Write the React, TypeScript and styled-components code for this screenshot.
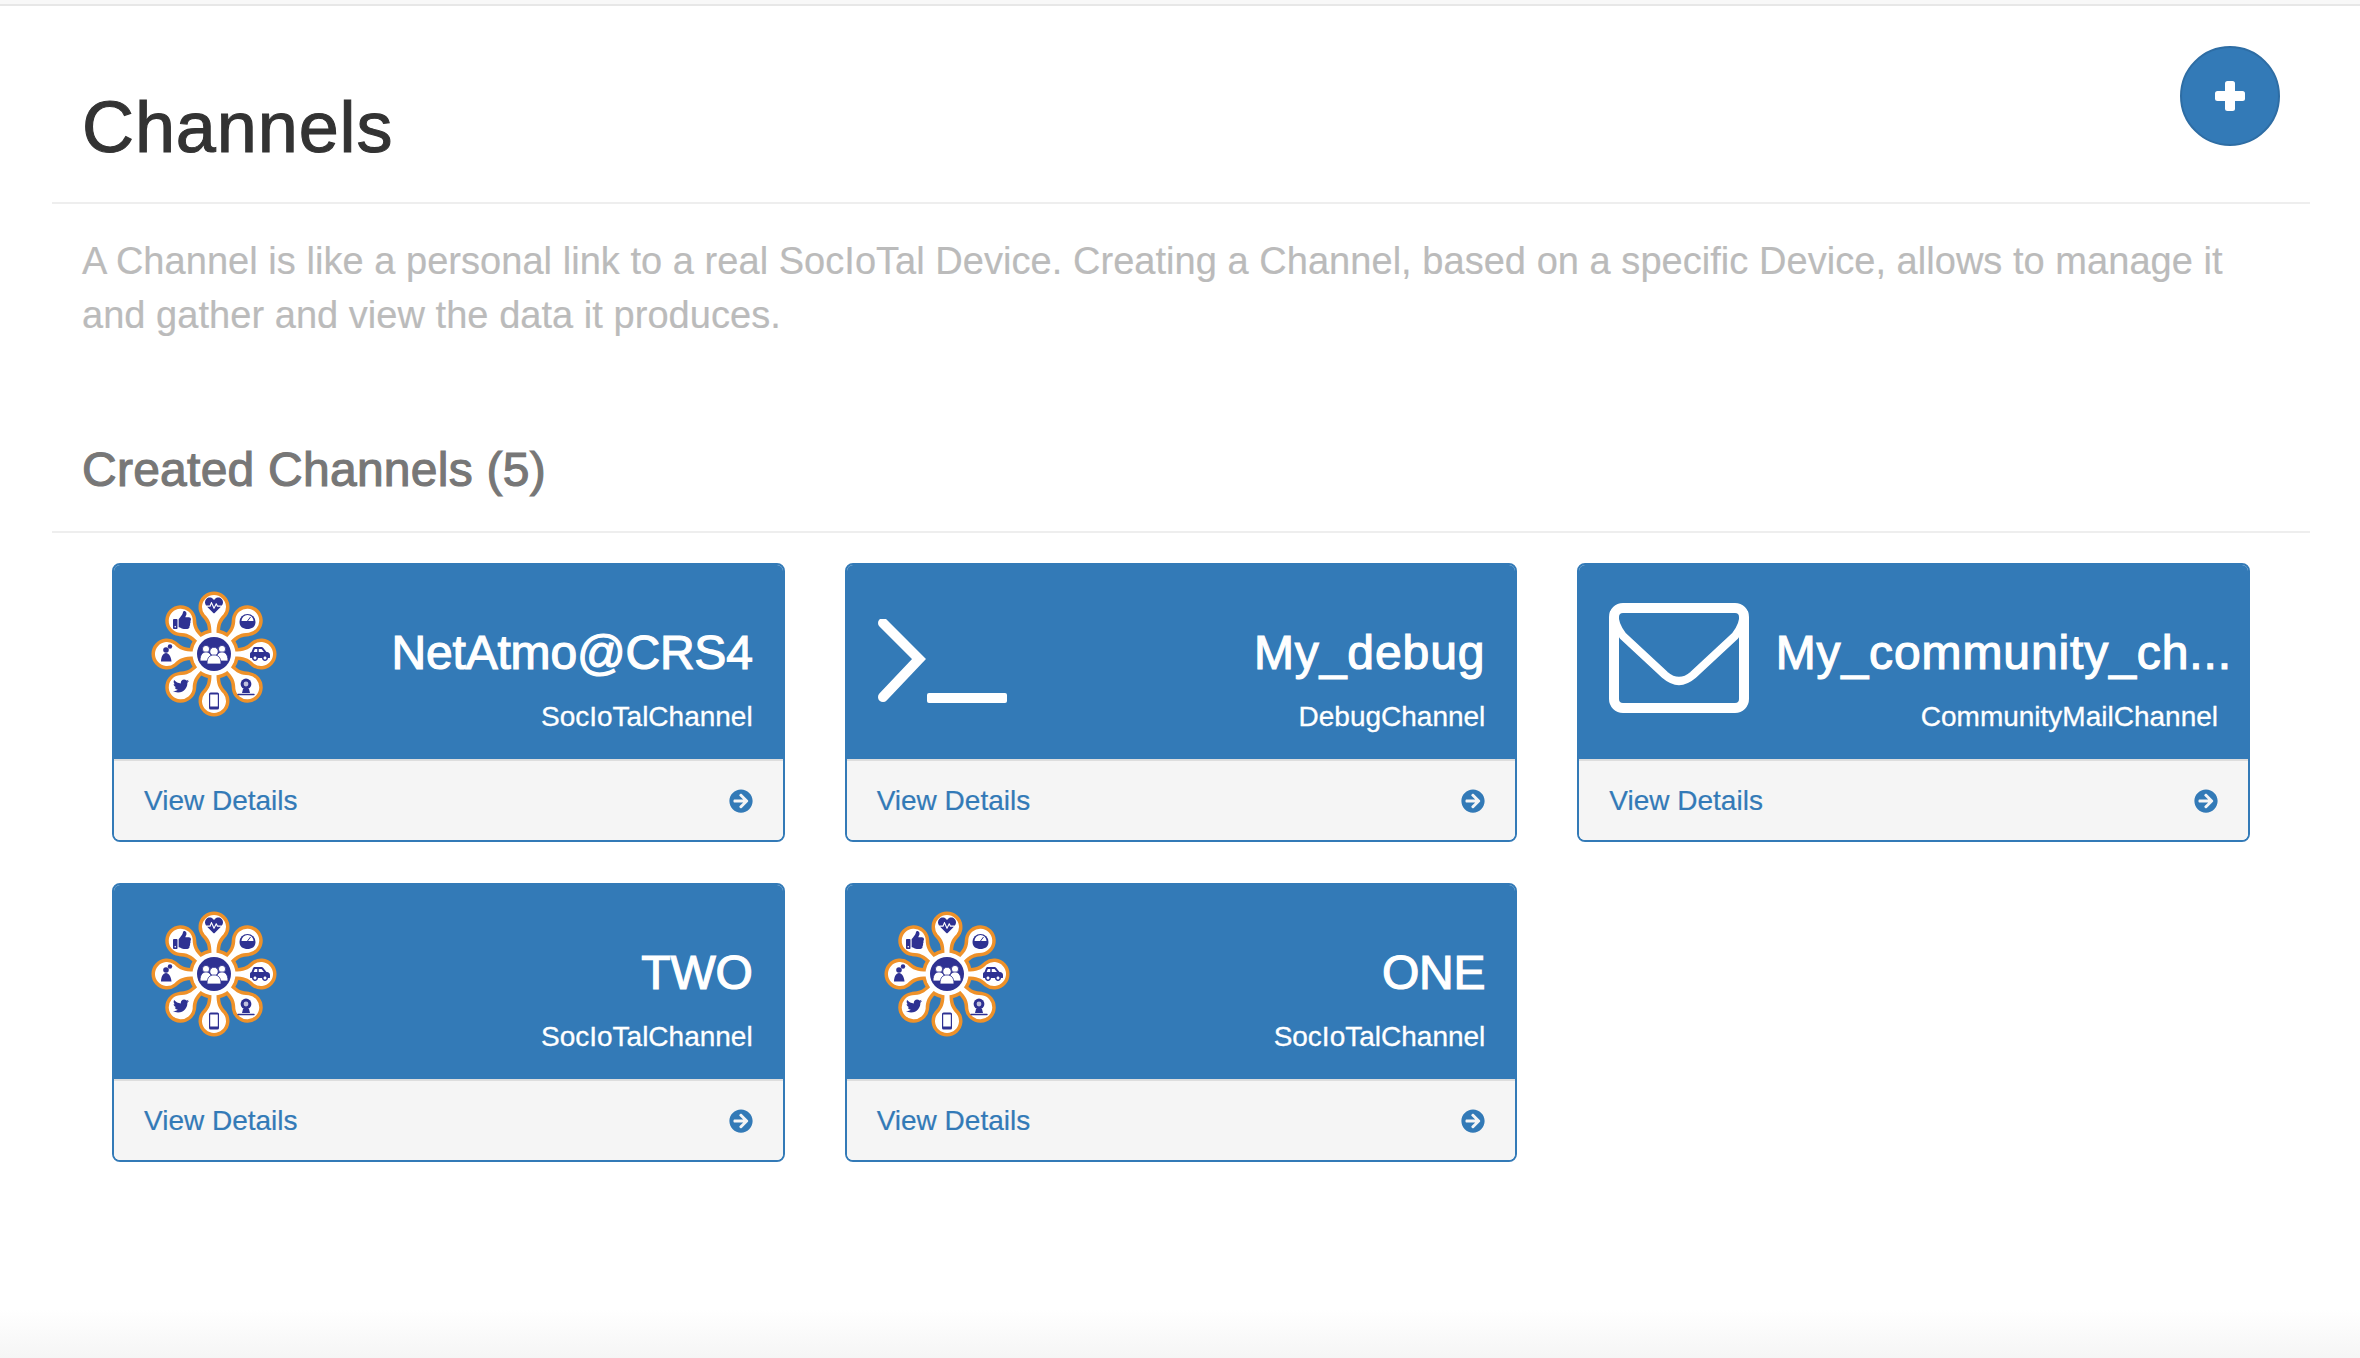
import React from 'react'
import styled, { createGlobalStyle } from 'styled-components'
import { FaArrowCircleRight, FaCarSide, FaHeartbeat, FaThumbsUp, FaTwitter } from 'react-icons/fa'

const NAVY = '#2e3192'
const ORANGE = '#ee9129'
const BLUE = '#337ab7'

const GlobalStyle = createGlobalStyle`
  html, body {
    margin: 0;
    padding: 0;
    background: #fff;
    font-family: 'Liberation Sans', Arial, sans-serif;
  }
  * {
    box-sizing: border-box;
  }
`

const Page = styled.div`
  display: flex;
  flex-direction: column;
  height: 1358px;
  overflow: hidden;
`

const TopBar = styled.div`
  height: 6px;
  background: #f8f8f8;
  border-bottom: 2px solid #e7e7e7;
`

const Main = styled.main`
  flex: 1;
  padding: 0 50px 0 52px;
`

const PageHeader = styled.header`
  display: flex;
  justify-content: space-between;
  align-items: flex-start;
  height: 198px;
  padding: 0 30px;
  border-bottom: 2px solid #eee;
`

const Title = styled.h1`
  margin: 82px 0 0;
  font-size: 72px;
  line-height: 79px;
  font-weight: 400;
  letter-spacing: 0.9px;
  color: #333;
  -webkit-text-stroke: 1.1px #333;
`

const AddButton = styled.button`
  display: flex;
  align-items: center;
  justify-content: center;
  width: 100px;
  height: 100px;
  margin-top: 40px;
  padding: 0;
  border: 2px solid #2e6da4;
  border-radius: 50%;
  background: ${BLUE};
  cursor: pointer;
`

const Lead = styled.p`
  margin: 30px 0 0;
  padding: 0 30px;
  font-size: 38px;
  line-height: 54px;
  letter-spacing: 0.04px;
  color: #bbb;
  -webkit-text-stroke: 0.2px #bbb;
`

const SectionHeader = styled.h2`
  margin: 101px 0 0;
  height: 90px;
  padding: 0 30px;
  font-size: 48px;
  line-height: 53px;
  font-weight: 400;
  letter-spacing: 0.25px;
  color: #777;
  border-bottom: 2px solid #eee;
  -webkit-text-stroke: 1.1px #777;
`

const CardGrid = styled.div`
  display: grid;
  grid-template-columns: repeat(3, 1fr);
  gap: 41px 60px;
  padding: 30px 60px 0;
`

const Card = styled.article`
  border: 2px solid ${BLUE};
  border-radius: 8px;
  overflow: hidden;
`

const CardHeading = styled.div`
  display: flex;
  justify-content: space-between;
  height: 194px;
  padding: 0 30px;
  background: ${BLUE};
  color: #fff;
`

const IconCell = styled.div<{ $top: number; $left: number }>`
  flex: none;
  margin: ${p => p.$top}px 0 0 ${p => p.$left}px;
  line-height: 0;
`

const CardText = styled.div`
  display: flex;
  flex-direction: column;
  align-items: flex-end;
  min-width: 0;
`

const CardTitle = styled.div<{ $wide?: boolean; $tracking: number }>`
  margin: 61px ${p => (p.$wide ? '-14px' : '0')} 0 0;
  font-size: 48px;
  line-height: 53px;
  letter-spacing: ${p => p.$tracking}px;
  white-space: nowrap;
  -webkit-text-stroke: 1.2px #fff;
`

const CardType = styled.div`
  margin-top: 18px;
  font-size: 28px;
  line-height: 40px;
  white-space: nowrap;
  -webkit-text-stroke: 0.3px #fff;
`

const CardFooter = styled.a`
  display: flex;
  justify-content: space-between;
  align-items: center;
  height: 81px;
  padding: 0 30px;
  background: #f5f5f5;
  border-top: 2px solid #ddd;
  color: ${BLUE};
  font-size: 28px;
  -webkit-text-stroke: 0.2px ${BLUE};
  cursor: pointer;
`

const PageFoot = styled.footer`
  flex: none;
  height: 48px;
  background: linear-gradient(to bottom, #fff, #f5f5f5);
`

const petal = 'M-2.5,-20 C-2.5,-30 -4,-34 -9.5,-39.7 A12,12 0 1 1 9.5,-39.7 C4,-34 2.5,-30 2.5,-20 Z'
const angles = [0, 45, 90, 135, 180, 225, 270, 315]

const FlowerLogo = () => (
  <svg width="126" height="126" viewBox="-63 -63 126 126">
    <circle r="25" fill={ORANGE} />
    {angles.map(a => (
      <path key={a} d={petal} transform={`rotate(${a})`} fill={ORANGE} stroke={ORANGE} strokeWidth="7" strokeLinejoin="round" />
    ))}
    <circle r="21.5" fill="#fff" />
    {angles.map(a => (
      <path key={a} d={petal} transform={`rotate(${a})`} fill="#fff" />
    ))}
    <circle r="17" fill={NAVY} />

    {/* people in the middle */}
    <g fill="#fff" stroke={NAVY} strokeWidth="0.8">
      <circle cx="-8" cy="-5" r="3.6" />
      <path d="M-14,7 C-14,0 -11,-2 -8,-2 C-5,-2 -2,0 -2,7 Z" />
      <circle cx="8" cy="-5" r="3.6" />
      <path d="M2,7 C2,0 5,-2 8,-2 C11,-2 14,0 14,7 Z" />
      <circle cx="0" cy="-2.5" r="4.2" />
      <path d="M-7,10 C-7,3 -4,1 0,1 C4,1 7,3 7,10 Z" />
    </g>

    <FaHeartbeat x={-9} y={-57.5} size={18} color={NAVY} />
    <FaThumbsUp x={-41} y={-43} size={18} color={NAVY} />
    <FaCarSide x={36} y={-10} size={20} color={NAVY} />
    <FaTwitter x={-41} y={24} size={16} color={NAVY} />

    {/* gauge */}
    <g transform="translate(33.5,-33)">
      <path d="M-8,1 A8,8 0 1 1 8,1 C8,6 4,8 0,8 C-4,8 -8,6 -8,1 Z" fill={NAVY} />
      <path d="M-6,0 A6,6 0 0 1 6,0 Z" fill="#fff" />
      <path d="M0,0 L3,-4" stroke={NAVY} strokeWidth="1" />
    </g>

    {/* webcam */}
    <g transform="translate(32,33)">
      <circle cy="-3" r="5.4" fill={NAVY} />
      <circle cy="-3" r="2.4" fill="#fff" opacity="0.7" />
      <path d="M-3,2 H3 L4,6 H-4 Z" fill={NAVY} />
      <path d="M-8,7.5 H8" stroke={NAVY} strokeWidth="1.4" strokeLinecap="round" fill="none" />
    </g>

    {/* phone */}
    <g transform="translate(0,47)">
      <rect x="-5" y="-8.5" width="10" height="17" rx="1.6" fill={NAVY} />
      <rect x="-3.8" y="-6.5" width="7.6" height="12" fill="#fff" />
    </g>

    {/* person with badge */}
    <g transform="translate(-47,0)" fill={NAVY}>
      <circle cx="-1" cy="-4" r="2.8" />
      <path d="M-6,7.5 C-6,3 -4,-1 -1,-1 C2,-1 4,3 4.5,7.5 Z" />
      <circle cx="3" cy="-7.5" r="2.2" />
    </g>
  </svg>
)

const TerminalIcon = () => (
  <svg width="130" height="86" viewBox="0 0 130 86">
    <path d="M5,4 L41,40 L5,78" fill="none" stroke="#fff" strokeWidth="10" strokeLinecap="round" strokeLinejoin="miter" />
    <rect x="49" y="74" width="80" height="10" rx="2" fill="#fff" />
  </svg>
)

const MailIcon = () => (
  <svg width="140" height="110" viewBox="0 0 140 110">
    <rect x="5" y="5" width="130" height="100" rx="9" fill="none" stroke="#fff" strokeWidth="10" />
    <path d="M5,8 C5,20 9,27 14,33 L56,72 Q70,84 84,72 L126,33 C131,27 135,20 135,8" fill="none" stroke="#fff" strokeWidth="8" />
  </svg>
)

interface IChannel {
  name: string
  type: string
  kind: 'flower' | 'terminal' | 'mail'
}

const channels: IChannel[] = [
  { name: 'NetAtmo@CRS4', type: 'SocIoTalChannel', kind: 'flower' },
  { name: 'My_debug', type: 'DebugChannel', kind: 'terminal' },
  { name: 'My_community_ch...', type: 'CommunityMailChannel', kind: 'mail' },
  { name: 'TWO', type: 'SocIoTalChannel', kind: 'flower' },
  { name: 'ONE', type: 'SocIoTalChannel', kind: 'flower' },
]

const ChannelIcon: React.FC<{ kind: IChannel['kind'] }> = ({ kind }) => {
  if (kind === 'terminal') {
    return (
      <IconCell $top={54} $left={1}>
        <TerminalIcon />
      </IconCell>
    )
  }
  if (kind === 'mail') {
    return (
      <IconCell $top={38} $left={0}>
        <MailIcon />
      </IconCell>
    )
  }
  return (
    <IconCell $top={26} $left={7}>
      <FlowerLogo />
    </IconCell>
  )
}

const App = () => (
  <Page>
    <GlobalStyle />
    <TopBar />
    <Main>
      <PageHeader>
        <Title>Channels</Title>
        <AddButton aria-label="Add channel">
          <svg width="30" height="30" viewBox="0 0 30 30">
            <rect x="10" y="0" width="10" height="30" rx="2.5" fill="#fff" />
            <rect x="0" y="10" width="30" height="10" rx="2.5" fill="#fff" />
          </svg>
        </AddButton>
      </PageHeader>
      <Lead>
        A Channel is like a personal link to a real SocIoTal Device. Creating a Channel, based on a specific Device, allows to manage it and gather and view the data it produces.
      </Lead>
      <SectionHeader>Created Channels (5)</SectionHeader>
      <CardGrid>
        {channels.map(channel => (
          <Card key={channel.name}>
            <CardHeading>
              <ChannelIcon kind={channel.kind} />
              <CardText>
                <CardTitle $wide={channel.kind === 'mail'} $tracking={channel.name.includes('_') ? 0.9 : -0.2}>
                  {channel.name}
                </CardTitle>
                <CardType>{channel.type}</CardType>
              </CardText>
            </CardHeading>
            <CardFooter>
              View Details
              <FaArrowCircleRight size={24} />
            </CardFooter>
          </Card>
        ))}
      </CardGrid>
    </Main>
    <PageFoot />
  </Page>
)

export default App
